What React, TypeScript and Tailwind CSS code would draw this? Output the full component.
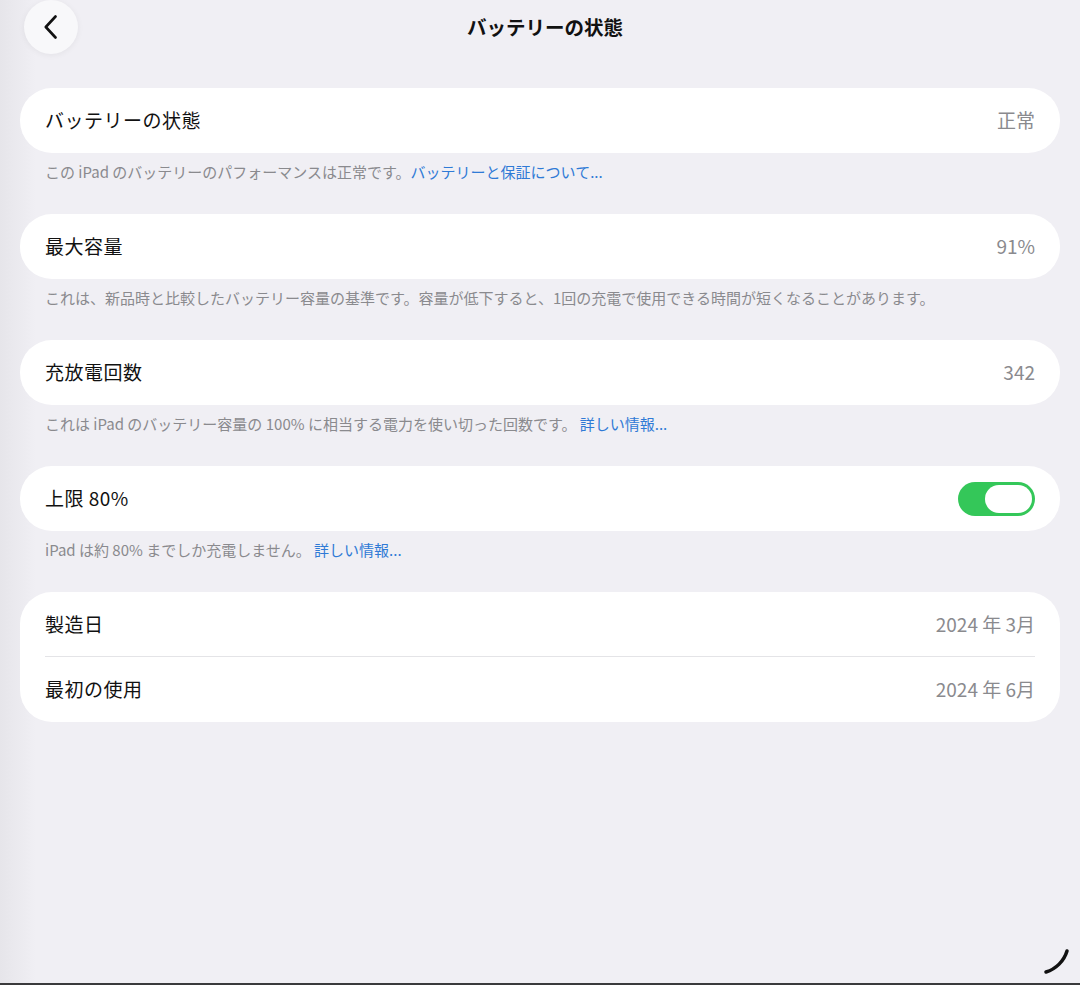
import React from "react";

const font = { fontFamily: '"Noto Sans CJK JP", "Noto Sans", sans-serif' };

const Card = ({ children }: { children: React.ReactNode }) => (
  <div className="bg-white rounded-[32px] px-[25px]">{children}</div>
);

const Row = ({ label, value, border }: { label: string; value?: React.ReactNode; border?: boolean }) => (
  <div className={`flex items-center justify-between h-[65px] ${border ? "border-b border-[#e4e4e7]" : ""}`}>
    <span className="text-[19px] text-[#111111] tracking-[0.5px]">{label}</span>
    {typeof value === "string" ? <span className="text-[19px] text-[#8a8a8e]">{value}</span> : value}
  </div>
);

const Footer = ({ children }: { children: React.ReactNode }) => (
  <p className="px-[25px] pt-[9px] pb-[32px] text-[15px] leading-[20px] text-[#8a8a8e]">{children}</p>
);

const Link = ({ children }: { children: React.ReactNode }) => (
  <span className="text-[#2f7ad6]">{children}</span>
);

const Toggle = () => (
  <div className="w-[77px] h-[34px] rounded-full bg-[#34c759] p-[3px] flex justify-end">
    <div className="w-[47px] h-[28px] rounded-full bg-white" />
  </div>
);

export default function App() {
  return (
    <div
      className="relative h-[985px] overflow-hidden bg-[linear-gradient(to_right,#e6e5ea,#f0eff4_36px)] flex flex-col"
      style={font}
    >
      <div className="relative h-[54px] flex items-center justify-center shrink-0">
        <button className="absolute left-[24px] top-0 w-[54px] h-[54px] rounded-full bg-[#f8f8fa] shadow-[0_1px_6px_rgba(0,0,0,0.06)] flex items-center justify-center">
          <svg width="14" height="24" viewBox="0 0 14 24" fill="none">
            <path d="M11.5 1.5 L1.8 12 L11.5 22.5" stroke="#111" strokeWidth="2.6" strokeLinecap="round" strokeLinejoin="round" />
          </svg>
        </button>
        <h1 className="text-[19.5px] font-bold text-[#111111] ml-[10px]">バッテリーの状態</h1>
      </div>

      <div className="px-5 pt-[34px] flex-1">
        <Card>
          <Row label="バッテリーの状態" value="正常" />
        </Card>
        <Footer>
          この iPad のバッテリーのパフォーマンスは正常です。<Link>バッテリーと保証について...</Link>
        </Footer>

        <Card>
          <Row label="最大容量" value="91%" />
        </Card>
        <Footer>
          これは、新品時と比較したバッテリー容量の基準です。容量が低下すると、1回の充電で使用できる時間が短くなることがあります。
        </Footer>

        <Card>
          <Row label="充放電回数" value="342" />
        </Card>
        <Footer>
          これは iPad のバッテリー容量の 100% に相当する電力を使い切った回数です。 <Link>詳しい情報...</Link>
        </Footer>

        <Card>
          <Row label="上限 80%" value={<Toggle />} />
        </Card>
        <Footer>
          iPad は約 80% までしか充電しません。 <Link>詳しい情報...</Link>
        </Footer>

        <Card>
          <Row label="製造日" value="2024 年 3月" border />
          <Row label="最初の使用" value="2024 年 6月" />
        </Card>
      </div>

      <svg className="absolute right-[6px] bottom-[8px]" width="32" height="32" viewBox="0 0 32 32" fill="none">
        <path d="M4 27 C14 24 22 16 25 6" stroke="#111" strokeWidth="3.5" strokeLinecap="round" />
      </svg>
      <div className="h-[2px] bg-[#3a3a3c] shrink-0" />
    </div>
  );
}
